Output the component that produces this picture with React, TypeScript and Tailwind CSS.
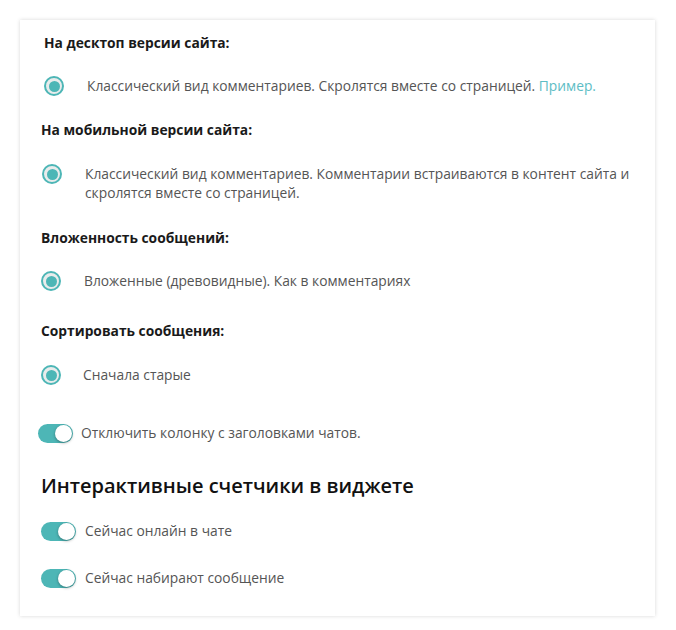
const font = { fontFamily: '"Open Sans", "Noto Sans", sans-serif' };

function Radio() {
  return (
    <span className="flex h-5 w-5 shrink-0 items-center justify-center rounded-full border-2 border-[#4db6b6] bg-[#e9ecec]">
      <span className="h-[11px] w-[11px] rounded-full bg-[#4db6b6]" />
    </span>
  );
}

function Toggle() {
  return (
    <span className="relative flex h-[19px] w-[35px] shrink-0 items-center rounded-full bg-[#4db6b6]">
      <span className="absolute right-[1px] h-[17px] w-[17px] rounded-full bg-white shadow-[0_1px_3px_rgba(0,0,0,0.35)]" />
    </span>
  );
}

export default function App() {
  return (
    <div className="min-h-screen bg-white pt-5 pl-5" style={font}>
      <div className="w-[635px] bg-white pt-[13px] pb-[28px] pl-[21px] pr-4 shadow-[0_0_4px_rgba(0,0,0,0.16)]">
        <div className="ml-[3px]">
          <h3 className="text-[13.8px] leading-5 font-bold text-[#1a1a1a]">На десктоп версии сайта:</h3>
          <div className="mt-[23px] flex items-center gap-[23px] text-[13.8px] leading-5 text-[#555]">
            <Radio />
            <p>
              Классический вид комментариев. Скролятся вместе со страницей.{" "}
              <span className="text-[#5dbdc5]">Пример.</span>
            </p>
          </div>
        </div>

        <h3 className="mt-6 text-[13.8px] leading-5 font-bold text-[#1a1a1a]">На мобильной версии сайта:</h3>
        <div className="mt-6 flex items-start gap-[23px] text-[13.8px] leading-[19px] text-[#555]">
          <span className="ml-[1px]">
            <Radio />
          </span>
          <p className="w-[555px]">
            Классический вид комментариев. Комментарии встраиваются в контент сайта и скролятся вместе со страницей.
          </p>
        </div>

        <h3 className="mt-[26px] text-[13.8px] leading-5 font-bold text-[#1a1a1a]">Вложенность сообщений:</h3>
        <div className="mt-[23px] flex items-center gap-[23px] text-[13.8px] leading-5 text-[#555]">
          <Radio />
          <p>Вложенные (древовидные). Как в комментариях</p>
        </div>

        <h3 className="mt-[30px] text-[13.8px] leading-5 font-bold text-[#1a1a1a]">Сортировать сообщения:</h3>
        <div className="mt-6 flex items-center gap-[22px] text-[13.8px] leading-5 text-[#555]">
          <Radio />
          <p>Сначала старые</p>
        </div>

        <div className="mt-[38px] -ml-[3px] flex items-center gap-2 text-[13.8px] leading-5 text-[#555]">
          <Toggle />
          <p>Отключить колонку с заголовками чатов.</p>
        </div>

        <h2 className="mt-[29px] text-xl leading-7 font-semibold text-[#111]">Интерактивные счетчики в виджете</h2>

        <div className="mt-[21px] flex items-center gap-[9px] text-[13.8px] leading-5 text-[#555]">
          <Toggle />
          <p>Сейчас онлайн в чате</p>
        </div>
        <div className="mt-[27px] flex items-center gap-[9px] text-[13.8px] leading-5 text-[#555]">
          <Toggle />
          <p>Сейчас набирают сообщение</p>
        </div>
      </div>
    </div>
  );
}
